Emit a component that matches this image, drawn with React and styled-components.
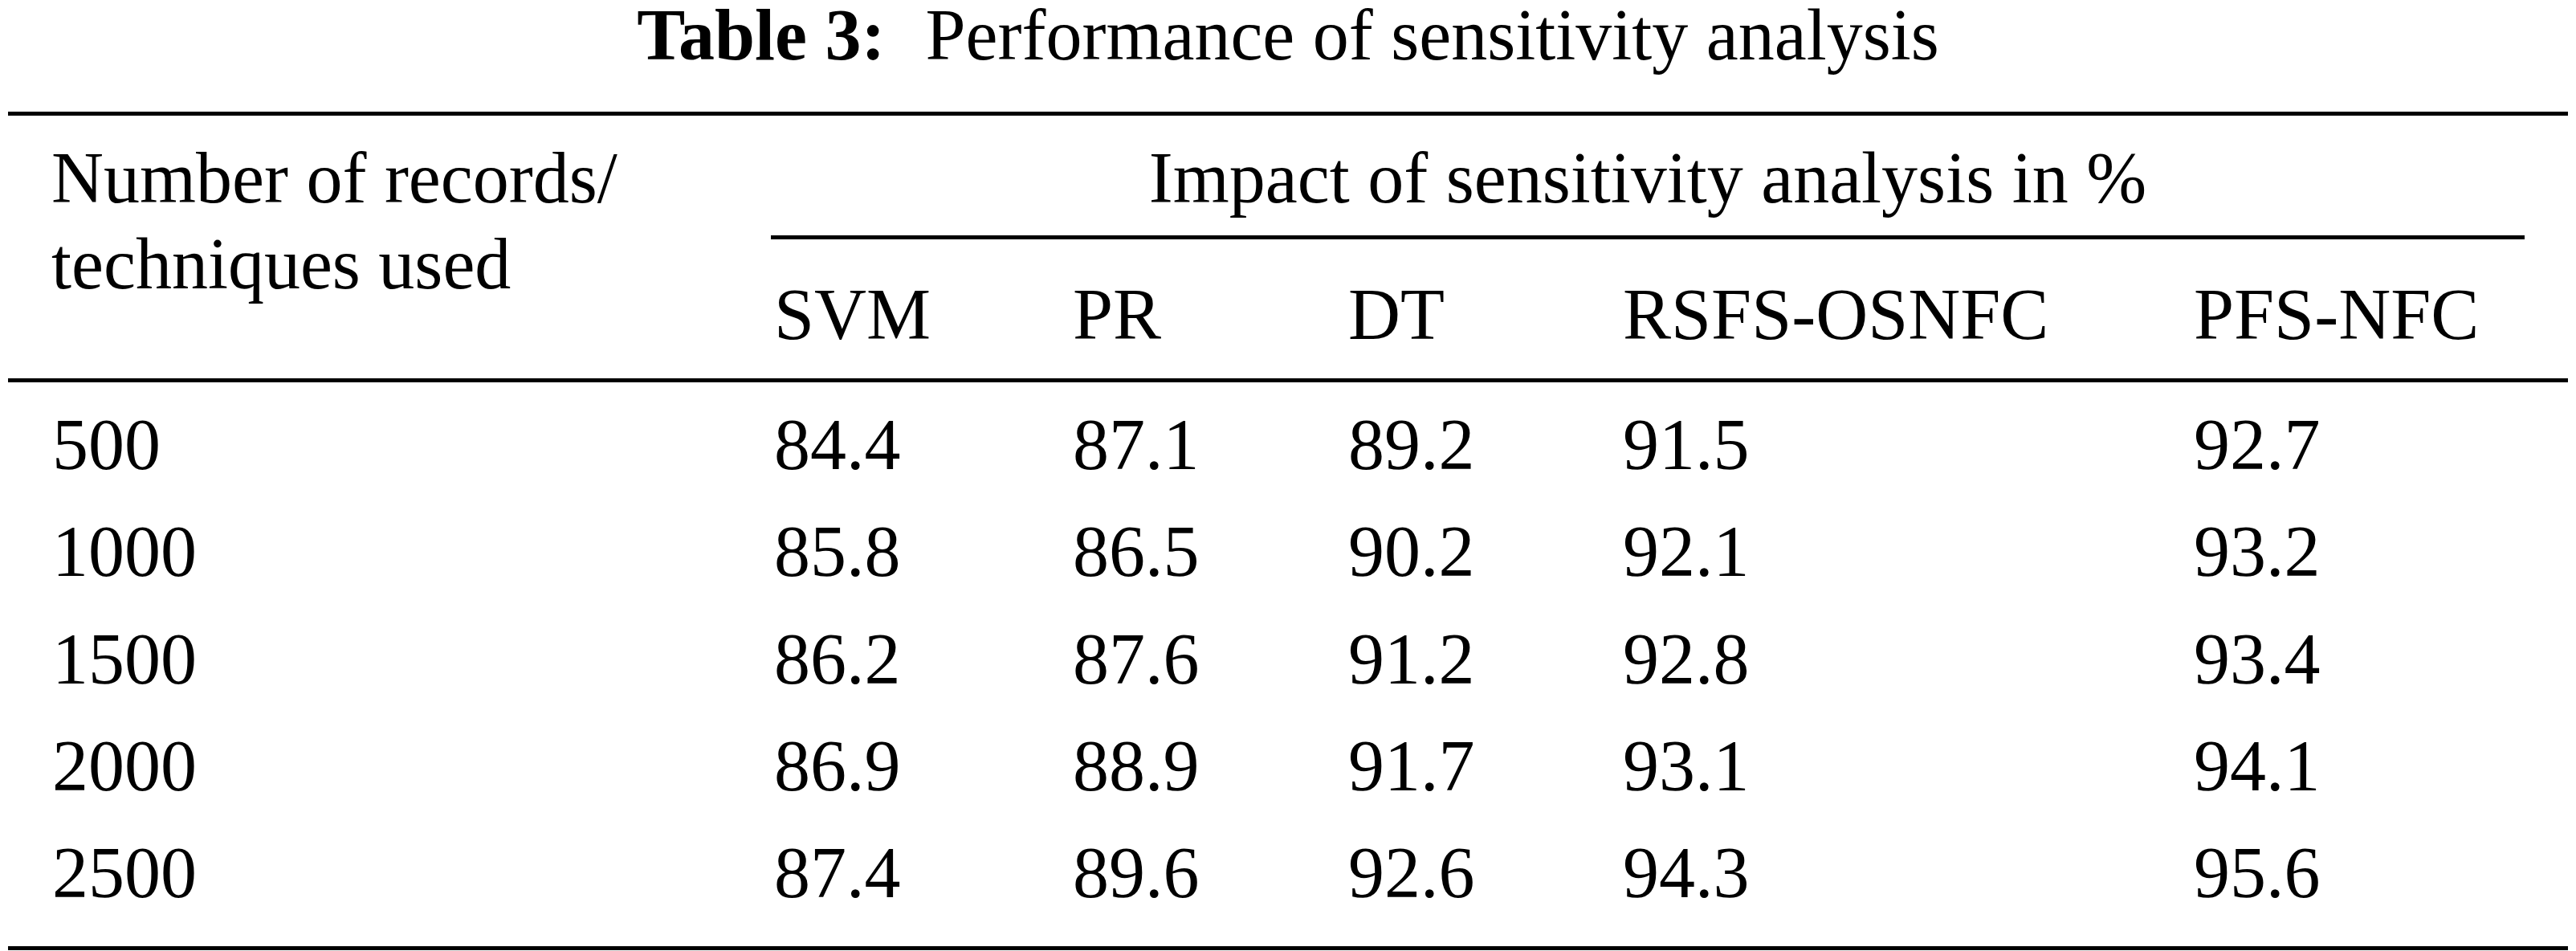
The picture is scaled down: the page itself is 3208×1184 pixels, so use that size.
import React from "react";
import styled, { createGlobalStyle } from "styled-components";

const Global = createGlobalStyle`
  html, body { margin: 0; padding: 0; background: #ffffff; }
  body { font-family: "Liberation Serif", "Times New Roman", serif; color: #000; }
`;

const COLS = "950px 372px 343px 342px 711px 416px 54px";

const Page = styled.div`
  width: 3208px;
  height: 1184px;
  background: #fff;
  font-size: 90px;
`;

const Caption = styled.div`
  height: 88px;
  line-height: 88px;
  text-align: center;
  white-space: nowrap;
  margin-bottom: 51px;
`;

const CaptionLabel = styled.span`
  font-weight: 700;
  margin-right: 50px;
`;

const Table = styled.div`
  margin-left: 10px;
  width: 3188px;
  border-top: 5px solid #000;
  border-bottom: 5px solid #000;
`;

const Head = styled.div`
  display: grid;
  grid-template-columns: ${COLS};
  grid-template-rows: auto auto;
  padding: 24px 0 26px;
  border-bottom: 5px solid #000;
  line-height: 107px;
`;

const StubHead = styled.div`
  grid-column: 1;
  grid-row: 1 / 3;
  padding-left: 54px;
`;

const SpanHead = styled.div`
  grid-column: 2 / 7;
  grid-row: 1;
  text-align: center;
  padding-bottom: 18px;
  border-bottom: 5px solid #000;
`;

const ColHead = styled.div`
  grid-row: 2;
  grid-column: ${(p) => p.$col};
  padding-top: 40px;
  padding-left: 4px;
  white-space: nowrap;
`;

const Body = styled.div`
  padding: 11px 0 24px;
`;

const Row = styled.div`
  display: grid;
  grid-template-columns: ${COLS};
  line-height: 133.33px;
`;

const Cell = styled.div`
  padding-left: ${(p) => (p.$stub ? "55px" : "4px")};
  white-space: nowrap;
`;

const methods = ["SVM", "PR", "DT", "RSFS-OSNFC", "PFS-NFC"];

const rows = [
  ["500", "84.4", "87.1", "89.2", "91.5", "92.7"],
  ["1000", "85.8", "86.5", "90.2", "92.1", "93.2"],
  ["1500", "86.2", "87.6", "91.2", "92.8", "93.4"],
  ["2000", "86.9", "88.9", "91.7", "93.1", "94.1"],
  ["2500", "87.4", "89.6", "92.6", "94.3", "95.6"],
];

export default function App() {
  return (
    <Page>
      <Global />
      <Caption>
        <CaptionLabel>Table 3:</CaptionLabel>
        Performance of sensitivity analysis
      </Caption>
      <Table>
        <Head>
          <StubHead>
            Number of records/
            <br />
            techniques used
          </StubHead>
          <SpanHead>Impact of sensitivity analysis in %</SpanHead>
          {methods.map((m, i) => (
            <ColHead key={m} $col={i + 2}>
              {m}
            </ColHead>
          ))}
        </Head>
        <Body>
          {rows.map((r) => (
            <Row key={r[0]}>
              {r.map((v, i) => (
                <Cell key={i} $stub={i === 0}>
                  {v}
                </Cell>
              ))}
              <Cell />
            </Row>
          ))}
        </Body>
      </Table>
    </Page>
  );
}
